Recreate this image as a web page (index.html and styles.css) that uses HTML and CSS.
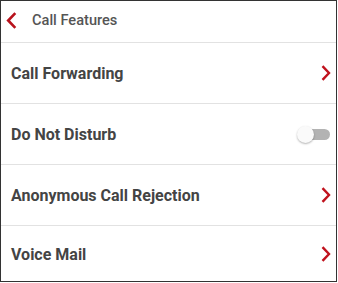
FILE: index.html
```html
<!DOCTYPE html>
<html>
<head>
<meta charset="utf-8">
<link rel="stylesheet" href="styles.css">
</head>
<body>
<div class="frame">
  <div class="header">
    <svg class="back" width="11" height="17" viewBox="0 0 11 17"><path d="M9.3 1.2 L2.2 8.5 L9.3 15.8" fill="none" stroke="#b8121c" stroke-width="2.6"/></svg>
    <span class="title">Call Features</span>
  </div>
  <div class="row">
    <span class="label">Call Forwarding</span>
    <svg class="chev" width="10" height="16" viewBox="0 0 10 16"><path d="M1.5 1.2 L8 8 L1.5 14.8" fill="none" stroke="#c0121d" stroke-width="2.4"/></svg>
  </div>
  <div class="row">
    <span class="label">Do Not Disturb</span>
    <span class="toggle"><span class="thumb"></span></span>
  </div>
  <div class="row">
    <span class="label">Anonymous Call Rejection</span>
    <svg class="chev" width="10" height="16" viewBox="0 0 10 16"><path d="M1.5 1.2 L8 8 L1.5 14.8" fill="none" stroke="#c0121d" stroke-width="2.4"/></svg>
  </div>
  <div class="row last">
    <span class="label">Voice Mail</span>
    <svg class="chev" width="10" height="16" viewBox="0 0 10 16"><path d="M1.5 1.2 L8 8 L1.5 14.8" fill="none" stroke="#c0121d" stroke-width="2.4"/></svg>
  </div>
</div>
</body>
</html>
```
FILE: styles.css
```css
html, body {
  margin: 0;
  padding: 0;
  background: #ffffff;
}
.frame {
  width: 337px;
  height: 282px;
  box-sizing: border-box;
  border: 1px solid #333333;
  background: #ffffff;
  font-family: Roboto, "Liberation Sans", sans-serif;
  display: flex;
  flex-direction: column;
}
.header {
  height: 38px;
  padding-bottom: 3px;
  border-bottom: 1px solid #e2e2e2;
  display: flex;
  align-items: center;
  padding-left: 5px;
}
.back {
  display: block;
  margin-top: 1px;
}
.title {
  margin-left: 15px;
  font-size: 14.6px;
  font-weight: 500;
  color: #555555;
}
.row {
  height: 60px;
  border-bottom: 1px solid #e2e2e2;
  display: flex;
  align-items: center;
  justify-content: space-between;
  padding-left: 10px;
  padding-right: 5px;
}
.row.last {
  border-bottom: none;
  flex: 1;
}
.label {
  font-size: 16px;
  font-weight: 700;
  color: #444444;
  padding-top: 1px;
}
.chev {
  display: block;
}
.toggle {
  position: relative;
  width: 29px;
  height: 11px;
  border-radius: 6px;
  background: #b3b3b3;
  margin-right: 1px;
}
.thumb {
  position: absolute;
  left: -4px;
  top: -3px;
  width: 17px;
  height: 17px;
  border-radius: 50%;
  background: #fafafa;
  box-shadow: 0 1px 2px rgba(0,0,0,0.3);
}
```
